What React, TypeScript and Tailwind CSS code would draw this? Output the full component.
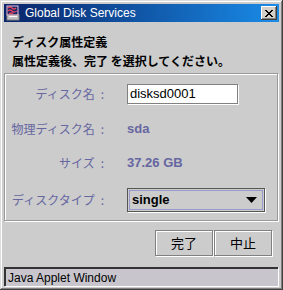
const JP = "font-['Noto_Sans_CJK_JP','Noto_Sans',sans-serif]";
const LAT = "font-['Liberation_Sans',Arial,sans-serif]";
const LABEL = `${JP} text-[12px] text-[#6666a0] text-right pr-[2px]`;

const rows = [
  { label: "ディスク名", h: "h-[36px]", kind: "input", value: "disksd0001" },
  { label: "物理ディスク名", h: "h-[34px]", kind: "text", value: "sda" },
  { label: "サイズ", h: "h-[34px]", kind: "text", value: "37.26 GB" },
  { label: "ディスクタイプ", h: "h-[40px]", kind: "select", value: "single" },
];

function AppIcon() {
  return (
    <svg width="16" height="16" viewBox="0 0 16 16">
      <rect x="2" y="10" width="12" height="5" fill="#c0c0c0" stroke="#808080" />
      <rect x="4" y="11" width="8" height="1" fill="#fff" />
      <path d="M3 3 q2 -2 4 0 q2 2 4 0 M3 6 q2 -2 4 0 q2 2 5 0 M4 9 q2 -2 4 0" stroke="#e0405a" strokeWidth="1.5" fill="none" />
      <rect x="2" y="1" width="11" height="9" fill="none" stroke="#f4c0d0" />
    </svg>
  );
}

export default function App() {
  return (
    <div className="w-[283px] h-[290px] bg-[#cccccc] p-[4px] flex flex-col shadow-[inset_-1px_-1px_#404040,inset_1px_1px_#dcdcdc,inset_-2px_-2px_#808080,inset_2px_2px_#ffffff] overflow-hidden">
      <div className="h-[18px] shrink-0 flex items-center bg-gradient-to-r from-[#0a246a] to-[#1a8ce8] pl-[1px] pr-[2px]">
        <AppIcon />
        <span className={`${LAT} text-[12px] text-white ml-[4px] leading-none`}>Global Disk Services</span>
        <div className="ml-auto w-[16px] h-[14px] bg-[#d4d0c8] flex items-center justify-center shadow-[inset_-1px_-1px_#404040,inset_1px_1px_#ffffff,inset_-2px_-2px_#808080]">
          <svg width="8" height="7" viewBox="0 0 8 7">
            <path d="M0 0 L7 7 M1 0 L8 7 M7 0 L0 7 M8 0 L1 7" stroke="#000" strokeWidth="1" />
          </svg>
        </div>
      </div>

      <div className={`${JP} h-[51px] shrink-0 pt-[10px] pl-[8px] text-[12px] text-black font-bold leading-[19px]`}>
        <div>ディスク属性定義</div>
        <div>属性定義後、完了 を選択してください。</div>
      </div>

      <div className="h-[148px] shrink-0 border border-[#999999] shadow-[inset_1px_1px_#ffffff,1px_1px_#ffffff] mr-[1px]">
        <div className="grid grid-cols-[101px_1fr] gap-x-[21px] pt-[2px]">
          {rows.map((r) => (
            <div key={r.label} className={`contents`}>
              <div className={`${LABEL} ${r.h} flex items-center justify-end`}>
                {r.label}
                <span className="ml-[6px]">:</span>
              </div>
              <div className={`${r.h} flex items-center`}>
                {r.kind === "input" && (
                  <div className={`${LAT} w-[111px] h-[20px] bg-white border border-[#808080] shadow-[1px_1px_#ffffff] flex items-center pl-[2px] text-[13px] text-black`}>
                    {r.value}
                  </div>
                )}
                {r.kind === "text" && (
                  <span className={`${LAT} text-[13px] font-bold text-[#6666a0]`}>{r.value}</span>
                )}
                {r.kind === "select" && (
                  <div className="w-[138px] h-[24px] border border-[#555555] shadow-[1px_1px_#ffffff] p-[1px]">
                    <div className={`${LAT} h-full border border-[#9999cc] flex items-center pl-[2px] pr-[5px] text-[13px] font-bold text-black`}>
                      {r.value}
                      <svg className="ml-auto" width="11" height="6" viewBox="0 0 11 6">
                        <path d="M0 0 H11 L5.5 6 Z" fill="#000" />
                      </svg>
                    </div>
                  </div>
                )}
              </div>
            </div>
          ))}
        </div>
      </div>

      <div className="h-[46px] shrink-0 flex justify-end items-start pt-[9px] pr-[7px] gap-[1px]">
        {["完了", "中止"].map((b) => (
          <div key={b} className={`${JP} w-[58px] h-[26px] border border-[#808080] shadow-[inset_1px_1px_#ffffff,1px_1px_#ffffff] flex items-center justify-center text-[13px] text-black`}>
            {b}
          </div>
        ))}
      </div>

      <div className={`${LAT} h-[19px] shrink-0 bg-[#c8c6cc] border-t-2 border-l-2 border-t-[#333333] border-l-[#333333] shadow-[1px_1px_#ffffff] flex items-center pl-[2px] text-[12px] text-black mr-[1px]`}>
        Java Applet Window
      </div>
    </div>
  );
}
